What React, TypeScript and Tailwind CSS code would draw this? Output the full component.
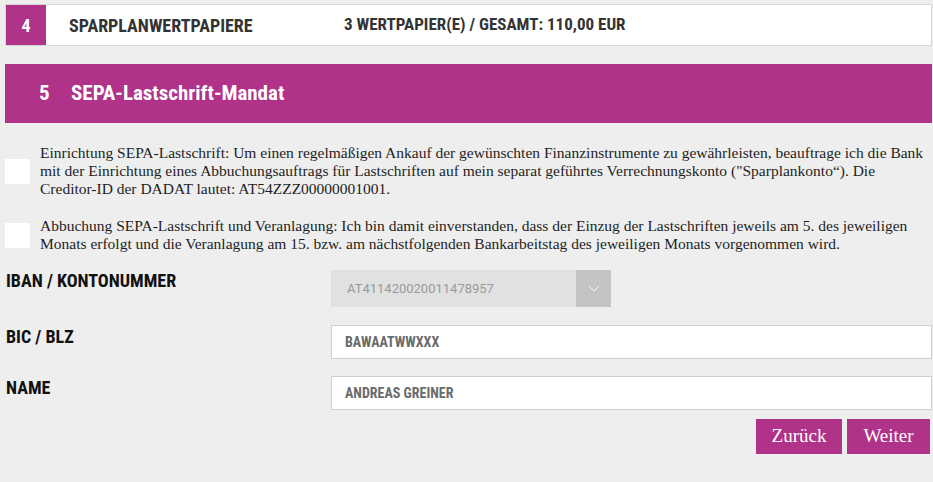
import React from "react";

export default function App() {
  return (
    <div className="w-[933px] h-[482px] bg-[#eeeeee] pl-[5px] pr-px pt-[4px] overflow-hidden">
      {/* Step 4 card */}
      <div className="flex items-stretch h-[42px] bg-white border border-[#d6d6d6] font-['Roboto_Condensed',sans-serif] font-bold text-[#333]">
        <div className="w-[40px] bg-[#b13289] flex items-center justify-center text-white text-[18px]">4</div>
        <div className="flex items-center pl-[23px] w-[298px] text-[18px]">SPARPLANWERTPAPIERE</div>
        <div className="flex items-center text-[17px]">3 WERTPAPIER(E) / GESAMT: 110,00 EUR</div>
      </div>

      {/* Step 5 header */}
      <div className="mt-[18px] h-[59px] bg-[#b13289] flex items-center text-white text-[21px] font-bold font-['Roboto_Condensed',sans-serif]">
        <span className="pl-[34px] w-[66px]">5</span>
        <span>SEPA-Lastschrift-Mandat</span>
      </div>

      {/* Checkbox paragraphs */}
      <div className="font-['Liberation_Serif',serif] text-[15.5px] leading-[18px] text-[#1e1e1e] pr-[6px]">
        <div className="mt-[21px] flex items-center gap-[10px]">
          <div className="w-[25px] h-[25px] bg-white shrink-0" />
          <p>
            Einrichtung SEPA-Lastschrift: Um einen regelmäßigen Ankauf der gewünschten Finanzinstrumente zu gewährleisten, beauftrage ich die Bank mit der Einrichtung eines Abbuchungsauftrags für Lastschriften auf mein separat geführtes Verrechnungskonto ("Sparplankonto“). Die Creditor-ID der DADAT lautet: AT54ZZZ00000001001.
          </p>
        </div>
        <div className="mt-[19px] flex items-center gap-[10px]">
          <div className="w-[25px] h-[25px] bg-white shrink-0" />
          <p>
            Abbuchung SEPA-Lastschrift und Veranlagung: Ich bin damit einverstanden, dass der Einzug der Lastschriften jeweils am 5. des jeweiligen Monats erfolgt und die Veranlagung am 15. bzw. am nächstfolgenden Bankarbeitstag des jeweiligen Monats vorgenommen wird.
          </p>
        </div>
      </div>

      {/* Form */}
      <div className="font-['Roboto_Condensed',sans-serif]">
        <div className="mt-[17px] flex items-start">
          <div className="w-[326px] pt-[2px] pl-px text-[18px] leading-none font-bold text-[#111]">IBAN / KONTONUMMER</div>
          <div className="w-[280px] h-[37px] bg-[#e1e1e1] flex items-stretch">
            <div className="flex-1 flex items-center pl-[16px] text-[13px] text-[#9a9a9a] font-['Roboto',sans-serif]">AT411420020011478957</div>
            <div className="w-[35px] bg-[#c4c4c4] flex items-center justify-center">
              <svg width="12" height="7" viewBox="0 0 12 7" fill="none">
                <path d="M0.5 0.5l5.5 5.5 5.5-5.5" stroke="#ffffff" strokeWidth="0.8" />
              </svg>
            </div>
          </div>
        </div>
        <div className="mt-[18px] flex items-start">
          <div className="w-[326px] pt-[3px] pl-px text-[18px] leading-none font-bold text-[#111]">BIC / BLZ</div>
          <div className="flex-1 h-[34px] bg-white border border-[#cfcfcf] flex items-center pl-[13px] text-[14px] font-bold text-[#6b6b6b]">BAWAATWWXXX</div>
        </div>
        <div className="mt-[17px] flex items-start">
          <div className="w-[326px] pt-[3px] pl-px text-[18px] leading-none font-bold text-[#111]">NAME</div>
          <div className="flex-1 h-[34px] bg-white border border-[#cfcfcf] flex items-center pl-[13px] text-[14px] font-bold text-[#6b6b6b]">ANDREAS GREINER</div>
        </div>
      </div>

      <div className="mt-[9px] flex justify-end gap-[5px] pr-[2px] font-['Liberation_Serif',serif] text-[19px] text-white">
        <button className="w-[86px] h-[35px] bg-[#b13289]">Zurück</button>
        <button className="w-[83px] h-[35px] bg-[#b13289]">Weiter</button>
      </div>
    </div>
  );
}
